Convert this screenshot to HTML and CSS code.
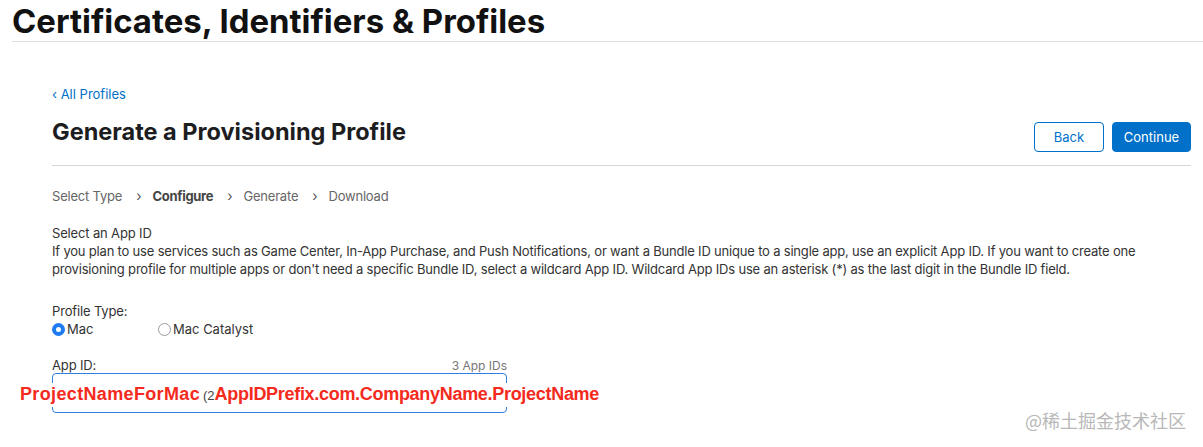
FILE: index.html
```html
<!DOCTYPE html>
<html>
<head>
<meta charset="utf-8">
<link rel="stylesheet" href="styles.css">
</head>
<body>
<header class="top">
  <h1 class="top-title">Certificates, Identifiers &amp; Profiles</h1>
</header>
<main class="main">
  <a class="back-link" href="#">‹ All Profiles</a>
  <div class="head-row">
    <h2 class="page-title">Generate a Provisioning Profile</h2>
    <div class="actions">
      <button class="btn btn-outline">Back</button>
      <button class="btn btn-primary">Continue</button>
    </div>
  </div>
  <nav class="steps">
    <span>Select Type</span><span class="chev">›</span><span class="cur">Configure</span><span class="chev">›</span><span>Generate</span><span class="chev">›</span><span>Download</span>
  </nav>
  <section class="desc">
    <div class="label">Select an App ID</div>
    <p class="para">If you plan to use services such as Game Center, In-App Purchase, and Push Notifications, or want a Bundle ID unique to a single app, use an explicit App ID. If you want to create one provisioning profile for multiple apps or don't need a specific Bundle ID, select a wildcard App ID. Wildcard App IDs use an asterisk (*) as the last digit in the Bundle ID field.</p>
  </section>
  <section class="ptype">
    <div class="label">Profile Type:</div>
    <div class="radios">
      <label class="radio"><span class="dot on"></span>Mac</label>
      <label class="radio"><span class="dot"></span>Mac Catalyst</label>
    </div>
  </section>
  <section class="appid">
    <div class="appid-head"><span class="label">App ID:</span><span class="count">3 App IDs</span></div>
    <div class="select-box"></div>
    <div class="overlay"><span class="red r1">ProjectNameForMac</span> <span class="gray">(2</span><span class="red r2">AppIDPrefix.com.CompanyName.ProjectName</span></div>
  </section>
</main>
<div class="watermark">@稀土掘金技术社区</div>
</body>
</html>
```
FILE: styles.css
```css
html, body { margin: 0; padding: 0; background: #fff; }
body {
  width: 1203px; height: 447px; overflow: hidden; position: relative;
  font-family: "Inter", "Liberation Sans", sans-serif; color: #333;
}
.top { margin-left: 12px; border-bottom: 1px solid #e0e0e0; height: 41px; }
.top-title {
  margin: 0; font-size: 32.9px; font-weight: 700; color: #111; line-height: 40px;
  letter-spacing: 0; position: relative; top: 1px;
}
.main { padding: 0 12px 0 52px; position: relative; }
.back-link {
  display: block; margin-top: 45px; font-size: 13px; color: #0070c9;
  text-decoration: none; line-height: 16px; position: relative; top: -1px;
}
.head-row {
  display: flex; align-items: flex-start; justify-content: space-between;
  margin-top: 11px; padding-bottom: 13px; border-bottom: 1px solid #d6d6d6;
}
.page-title { margin: 3px 0 0; font-size: 23.5px; font-weight: 700; color: #1d1d1f; line-height: 30px; }
.actions { display: flex; gap: 8px; margin-top: 8px; }
.btn {
  font-family: inherit; font-size: 13px; height: 30px; border-radius: 4px;
  padding: 0; cursor: pointer;
}
.btn-outline { width: 70px; background: #fff; border: 1px solid #0070c9; color: #0070c9; }
.btn-primary { width: 79px; background: #0070c9; border: 1px solid #0070c9; color: #fff; }
.steps { display: flex; margin-top: 21px; font-size: 13px; color: #666; line-height: 18px; letter-spacing: -0.2px; }
.steps .chev { margin: 0 11px 0 14px; font-size: 14px; color: #555; }
.steps .cur { font-weight: 700; color: #444; letter-spacing: -0.3px; }
.desc { margin-top: 19px; }
.label { font-size: 13px; color: #333; line-height: 18px; letter-spacing: -0.15px; }
.para { margin: 0; font-size: 13px; line-height: 18px; color: #333; letter-spacing: -0.19px; }
.ptype { margin-top: 24px; }
.radios { display: flex; gap: 0; }
.radio { display: flex; align-items: center; font-size: 13px; color: #333; line-height: 18px; }
.radio:first-child { width: 106px; }
.dot {
  width: 13px; height: 13px; border-radius: 50%; border: 1px solid #999;
  margin-right: 2px; box-sizing: border-box; background: #fff;
}
.dot.on { border: 4.5px solid #1e7bf0; background: #fff; }
.appid { margin-top: 18px; width: 455px; position: relative; }
.appid-head { display: flex; justify-content: space-between; align-items: baseline; }
.count { font-size: 12px; color: #777; }
.select-box {
  margin-top: -1px; height: 38px; border: 1.5px solid #2f7fe0; border-radius: 4px;
}
.overlay {
  position: absolute; left: -32px; top: 27px; white-space: nowrap;
  font-family: "Liberation Sans", Arial, sans-serif; font-weight: 700;
  font-size: 18px; line-height: 22px; background: #fff;
}
.overlay .red { color: #f42a1d; }
.overlay .r1 { letter-spacing: 0.35px; }
.overlay .r2 { letter-spacing: -0.3px; }
.overlay .gray { color: #444; font-weight: 400; font-size: 13px; margin-left: -2px; }
.watermark {
  position: absolute; left: 1025px; top: 409px; font-size: 18px; color: #b8b8b8;
  font-family: "Noto Sans CJK SC", sans-serif; line-height: 22px;
}
```
